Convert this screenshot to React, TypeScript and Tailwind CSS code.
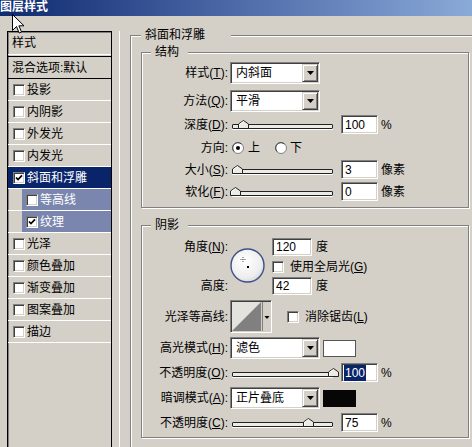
import React from "react";

const sunken =
  "border border-t-[#808080] border-l-[#808080] border-b-white border-r-white shadow-[inset_1px_1px_0_#404040,inset_-1px_-1px_0_#d4d0c8]";
const raised =
  "border border-t-[#d4d0c8] border-l-[#d4d0c8] border-b-[#404040] border-r-[#404040] shadow-[inset_1px_1px_0_#fff,inset_-1px_-1px_0_#808080]";

function Check({ checked }: { checked?: boolean }) {
  return (
    <div className={`w-[12px] h-[12px] bg-white ${sunken} flex items-center justify-center shrink-0`}>
      {checked && (
        <svg width="8" height="8" viewBox="0 0 8 8">
          <path d="M1 3.5 L3 5.6 L7 1.4" stroke="#000" strokeWidth="1.7" fill="none" />
        </svg>
      )}
    </div>
  );
}

function Radio({ checked }: { checked?: boolean }) {
  return (
    <svg width="12" height="12" viewBox="0 0 12 12" className="shrink-0">
      <circle cx="6" cy="6" r="5.5" fill="#fff" stroke="#808080" />
      <path d="M2.2 9.5 A4.6 4.6 0 0 1 9.5 2.2" stroke="#404040" fill="none" />
      {checked && <circle cx="6" cy="6" r="2" fill="#000" />}
    </svg>
  );
}

function Select({ value }: { value: string }) {
  return (
    <div className={`w-[90px] h-[22px] bg-white ${sunken} flex items-center shrink-0`}>
      <span className="flex-1 pl-[5px]">{value}</span>
      <div className={`w-[16px] h-[18px] mr-[1px] bg-[#d4d0c8] ${raised} flex items-center justify-center`}>
        <svg width="7" height="4" viewBox="0 0 7 4">
          <polygon points="0,0 7,0 3.5,4" fill="#000" />
        </svg>
      </div>
    </div>
  );
}

function Slider({ pos }: { pos: number }) {
  return (
    <div className="relative w-[106px] h-[19px] flex items-center shrink-0">
      <div className="ml-[2px] mt-[4px] w-[101px] h-[5px] border border-[#222] bg-[#ecebe6] rounded-[1px] shadow-[0_1px_0_#fff]" />
      <svg className="absolute top-[5px]" style={{ left: pos }} width="11" height="9" viewBox="0 0 11 9">
        <polygon points="0.5,8.5 0.5,4 5.5,0.5 10.5,4 10.5,8.5" fill="#ecebe6" stroke="#222" />
        <path d="M1.5 7.5 L1.5 4.4 L5.5 1.6" stroke="#fff" fill="none" />
      </svg>
    </div>
  );
}

function Field({ value, wide, selected }: { value: string; wide?: boolean; selected?: boolean }) {
  return (
    <div
      className={`${wide ? "w-[40px] h-[18px]" : "w-[37px] h-[19px]"} bg-white ${sunken} flex items-center pl-[2px] shrink-0`}
    >
      {selected ? <span className="bg-[#0a246a] text-white px-[1px]">{value}</span> : <span className="pl-[1px]">{value}</span>}
    </div>
  );
}

function Label({ children }: { children: React.ReactNode }) {
  return <div className="w-[86px] text-right shrink-0 whitespace-nowrap">{children}</div>;
}

function SliderRow({
  label,
  pos,
  value,
  unit,
  selected,
  className,
}: {
  label: React.ReactNode;
  pos: number;
  value: string;
  unit: string;
  selected?: boolean;
  className: string;
}) {
  return (
    <div className={`flex items-center h-[19px] ${className}`}>
      <Label>{label}</Label>
      <div className="ml-[2px]">
        <Slider pos={pos} />
      </div>
      <div className="ml-[5px]">
        <Field value={value} selected={selected} />
      </div>
      <span className="ml-[3px]">{unit}</span>
    </div>
  );
}

function ListRow({
  label,
  checked,
  variant,
}: {
  label: string;
  checked?: boolean;
  variant?: "active" | "sub";
}) {
  if (variant === "sub") {
    return (
      <div className="h-[22px] border-b border-white pl-[14px] flex">
        <div className="flex-1 bg-[#7a86ae] text-white flex items-center pl-[4px]">
          <Check checked={checked} />
          <span className="ml-[2px]">{label}</span>
        </div>
      </div>
    );
  }
  return (
    <div
      className={`h-[22px] border-b border-white flex items-center pl-[5px] ${
        variant === "active" ? "bg-[#0a246a] text-white" : ""
      }`}
    >
      <Check checked={checked} />
      <span className="ml-[2px]">{label}</span>
    </div>
  );
}

function Cursor() {
  return (
    <svg className="absolute left-[12px] top-[14px]" width="14" height="21" viewBox="0 0 14 21">
      <path
        d="M0.5 0.5 L0.5 16.5 L4.5 12.5 L7.2 19 L9.5 18 L6.9 11.8 L12 11.8 Z"
        fill="#fff"
        stroke="#000"
        strokeLinejoin="miter"
      />
    </svg>
  );
}

function AngleDial() {
  return (
    <svg width="36" height="36" viewBox="0 0 36 36">
      <defs>
        <radialGradient id="dialg" cx="42%" cy="38%" r="70%">
          <stop offset="0" stopColor="#ffffff" />
          <stop offset="0.7" stopColor="#eeeeee" />
          <stop offset="1" stopColor="#cfcfd4" />
        </radialGradient>
      </defs>
      <circle cx="17.5" cy="17.5" r="16.5" fill="url(#dialg)" stroke="#3d5088" strokeWidth="1.4" />
      <rect x="17" y="18" width="2" height="2" fill="#000" />
      <path d="M10.5 11.5 H15.5 M13 9 V14" stroke="#555" strokeWidth="1" strokeDasharray="1 1" />
    </svg>
  );
}

function ContourBox() {
  return (
    <div className={`w-[42px] h-[33px] ${sunken} bg-[#d4d0c8] shrink-0`}>
      <svg width="40" height="31" viewBox="0 0 40 31">
        <rect x="1" y="1" width="29" height="29" fill="#e4e2dd" />
        <polygon points="1,30 30,1 30,30" fill="#808080" />
        <line x1="31.5" y1="1" x2="31.5" y2="30" stroke="#808080" />
        <polygon points="33.5,15 38.5,15 36,18" fill="#000" />
      </svg>
    </div>
  );
}

export default function App() {
  return (
    <div className="relative w-[472px] h-[447px] overflow-hidden bg-[#d4d0c8] text-black text-[12px] leading-[16px] font-['Liberation_Sans','Noto_Sans_CJK_SC',sans-serif]">
      {/* Title bar */}
      <div className="h-[16px] bg-gradient-to-r from-[#0e2a70] via-[#4f6aa8] to-[#8aaad8] text-white font-bold text-[12px] leading-[15px]">
        图层样式
      </div>

      <div className="flex items-start pt-[15px] pl-[7px]">
        {/* Left list */}
        <div className="w-[105px] h-[430px] shrink-0 border border-black shadow-[inset_1px_1px_0_#808080] flex flex-col">
          <div className="h-[22px] flex items-center pl-[4px]">样式</div>
          <div className="h-[3px] border-t border-white border-b border-b-black" />
          <div className="h-[22px] border-b border-black flex items-center pl-[4px]">混合选项:默认</div>
          <ListRow label="投影" />
          <ListRow label="内阴影" />
          <ListRow label="外发光" />
          <ListRow label="内发光" />
          <ListRow label="斜面和浮雕" checked variant="active" />
          <ListRow label="等高线" variant="sub" />
          <ListRow label="纹理" checked variant="sub" />
          <ListRow label="光泽" />
          <ListRow label="颜色叠加" />
          <ListRow label="渐变叠加" />
          <ListRow label="图案叠加" />
          <ListRow label="描边" />
        </div>

        <div className="ml-[7px] w-px h-[420px] bg-white shrink-0" />

        {/* Outer group: 斜面和浮雕 */}
        <div className="relative ml-[10px] mt-[4px] w-[360px] h-[430px] shrink-0 border border-[#808080] shadow-[inset_1px_1px_0_#fff,1px_1px_0_#fff] pt-[16px] pl-[10px]">
          <span className="absolute left-[10px] -top-[9px] w-[90px] h-[17px] bg-[#d4d0c8] pl-[4px]">斜面和浮雕</span>

          {/* 结构 */}
          <div className="relative w-[328px] border border-[#808080] shadow-[inset_1px_1px_0_#fff,1px_1px_0_#fff] pb-[6px]">
            <span className="absolute left-[9px] -top-[9px] w-[37px] h-[17px] bg-[#d4d0c8] pl-[4px]">结构</span>

            <div className="flex items-center h-[22px] mt-[9px]">
              <Label>
                样式(<u>T</u>):
              </Label>
              <div className="ml-[2px]">
                <Select value="内斜面" />
              </div>
            </div>
            <div className="flex items-center h-[22px] mt-[6px]">
              <Label>
                方法(<u>Q</u>):
              </Label>
              <div className="ml-[2px]">
                <Select value="平滑" />
              </div>
            </div>
            <SliderRow
              className="mt-[3px]"
              label={
                <>
                  深度(<u>D</u>):
                </>
              }
              pos={8}
              value="100"
              unit="%"
            />
            <div className="flex items-center h-[20px] mt-[4px]">
              <Label>方向:</Label>
              <div className="ml-[4px] flex items-center">
                <Radio checked />
                <span className="ml-[4px]">上</span>
                <div className="ml-[15px]">
                  <Radio />
                </div>
                <span className="ml-[3px]">下</span>
              </div>
            </div>
            <SliderRow
              className="mt-[2px]"
              label={
                <>
                  大小(<u>S</u>):
                </>
              }
              pos={2}
              value="3"
              unit="像素"
            />
            <SliderRow
              className="mt-[3px]"
              label={
                <>
                  软化(<u>F</u>):
                </>
              }
              pos={0}
              value="0"
              unit="像素"
            />
          </div>

          {/* 阴影 */}
          <div className="relative mt-[17px] w-[328px] border border-[#808080] shadow-[inset_1px_1px_0_#fff,1px_1px_0_#fff] pb-[5px]">
            <span className="absolute left-[9px] -top-[9px] w-[37px] h-[17px] bg-[#d4d0c8] pl-[4px]">阴影</span>

            <div className="flex items-start mt-[12px]">
              <div className="flex flex-col w-[86px] shrink-0">
                <div className="h-[18px] flex items-center justify-end">
                  角度(<u>N</u>):
                </div>
                <div className="h-[18px] mt-[21px] flex items-center justify-end">高度:</div>
              </div>
              <div className="ml-[2px] mt-[10px] shrink-0">
                <AngleDial />
              </div>
              <div className="ml-[6px] flex flex-col">
                <div className="flex items-center h-[18px]">
                  <Field value="120" wide />
                  <span className="ml-[4px]">度</span>
                </div>
                <div className="flex items-center h-[16px] mt-[3px]">
                  <Check />
                  <span className="ml-[6px] whitespace-nowrap">
                    使用全局光(<u>G</u>)
                  </span>
                </div>
                <div className="flex items-center h-[18px] mt-[2px]">
                  <Field value="42" wide />
                  <span className="ml-[4px]">度</span>
                </div>
              </div>
            </div>

            <div className="flex items-center h-[33px] mt-[5px]">
              <Label>光泽等高线:</Label>
              <div className="ml-[2px]">
                <ContourBox />
              </div>
              <div className="ml-[15px]">
                <Check />
              </div>
              <span className="ml-[6px]">
                消除锯齿(<u>L</u>)
              </span>
            </div>

            <div className="flex items-center h-[22px] mt-[4px]">
              <Label>
                高光模式(<u>H</u>):
              </Label>
              <div className="ml-[2px]">
                <Select value="滤色" />
              </div>
              <div className="ml-[3px] w-[33px] h-[17px] bg-white border border-[#555]" />
            </div>
            <SliderRow
              className="mt-[4px]"
              label={
                <>
                  不透明度(<u>O</u>):
                </>
              }
              pos={98}
              value="100"
              unit="%"
              selected
            />
            <div className="flex items-center h-[22px] mt-[5px]">
              <Label>
                暗调模式(<u>A</u>):
              </Label>
              <div className="ml-[2px]">
                <Select value="正片叠底" />
              </div>
              <div className="ml-[3px] w-[33px] h-[17px] bg-[#060606]" />
            </div>
            <SliderRow
              className="mt-[4px]"
              label={
                <>
                  不透明度(<u>C</u>):
                </>
              }
              pos={73}
              value="75"
              unit="%"
            />
          </div>
        </div>
      </div>

      <Cursor />
    </div>
  );
}
